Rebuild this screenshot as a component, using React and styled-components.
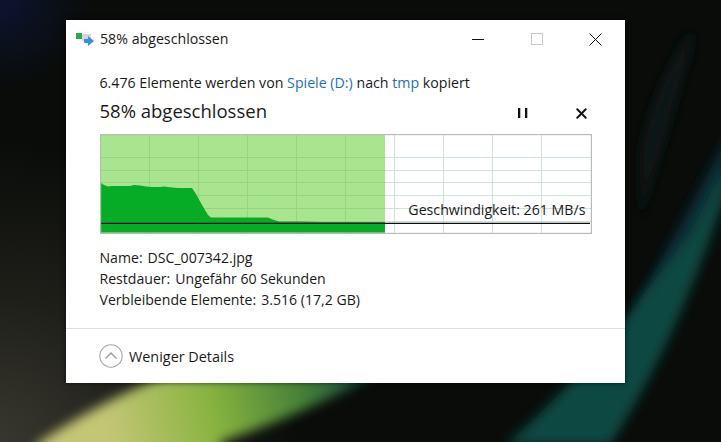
import styled, { createGlobalStyle } from "styled-components";
import { X } from "lucide-react";

const GlobalStyle = createGlobalStyle`
  html, body {
    margin: 0;
    padding: 0;
    height: 100%;
    background: #090c09;
    overflow: hidden;
  }
`;

const Desktop = styled.div`
  position: relative;
  width: 721px;
  height: 442px;
  padding: 20px 0 0 66px;
  box-sizing: border-box;
  overflow: hidden;
  font-family: "Open Sans", "Noto Sans", sans-serif;
`;

const Wallpaper = styled.svg`
  position: absolute;
  left: 0;
  top: 0;
`;

const Window = styled.div`
  position: relative;
  width: 559px;
  height: 363px;
  background: #ffffff;
  display: flex;
  flex-direction: column;
  box-shadow: 0 0 5px rgba(0, 0, 0, 0.6);
`;

const TitleBar = styled.div`
  display: flex;
  align-items: center;
  height: 38px;
  padding-left: 10px;
`;

const TitleText = styled.div`
  flex: 1;
  margin-left: 3px;
  margin-top: -2px;
  font-size: 14.2px;
  color: #1a1a1a;
`;

const WinButton = styled.div`
  width: 59px;
  height: 38px;
  display: flex;
  align-items: center;
  justify-content: center;
`;

const Body = styled.div`
  flex: 1;
  display: flex;
  flex-direction: column;
  padding: 15px 33px 0 33.5px;
`;

const CopyLine = styled.div`
  font-size: 14.2px;
  line-height: 19px;
  white-space: nowrap;
  color: #1a1a1a;
`;

const Accent = styled.span`
  color: #1c6fb8;
`;

const ProgressRow = styled.div`
  display: flex;
  align-items: center;
  height: 28px;
  margin: 4px -18px 10px 0;
`;

const ProgressTitle = styled.div`
  flex: 1;
  font-size: 18.5px;
  color: #1a1a1a;
`;

const ActionButton = styled.div`
  width: 58px;
  margin-top: 6px;
  display: flex;
  align-items: center;
  justify-content: center;
  color: #111;
`;

const Graph = styled.div`
  position: relative;
  width: 492px;
  height: 100px;
`;

const SpeedLabel = styled.div`
  position: absolute;
  right: 6px;
  top: 66px;
  font-size: 14.2px;
  line-height: 19px;
  white-space: nowrap;
  color: #1a1a1a;
`;

const Details = styled.div`
  margin-top: 13px;
  display: flex;
  flex-direction: column;
`;

const DetailRow = styled.div`
  display: flex;
  gap: 5px;
  font-size: 14.1px;
  line-height: 21px;
  color: #1a1a1a;
`;

const Footer = styled.div`
  height: 54px;
  border-top: 1px solid #dfdfdf;
  display: flex;
  align-items: center;
  padding-left: 33px;
  gap: 6px;
  font-size: 14.4px;
  color: #1a1a1a;
`;

const vLines = [149.5, 198.5, 247.5, 296.5, 345.5, 394.5, 443.5, 492.5, 541.5];
const hLines = [157.5, 170.5, 182.5, 195.5, 208.5, 221.5];

function GraphDrawing() {
  return (
    <svg width="492" height="100" viewBox="100 134 492 100">
      <rect x="100" y="134" width="492" height="100" fill="#ffffff" />
      <rect x="101" y="135" width="284" height="98" fill="#a9e48f" />
      {vLines.map((x) => (
        <line
          key={x}
          x1={x}
          x2={x}
          y1="135"
          y2="233"
          stroke={x < 385 ? "#95d481" : "#cfe3dc"}
        />
      ))}
      {hLines.map((y) => (
        <g key={y}>
          <line x1="101" x2="385" y1={y} y2={y} stroke="#95d481" />
          <line x1="385" x2="591" y1={y} y2={y} stroke="#cfe3dc" />
        </g>
      ))}
      <polygon
        fill="#06ab26"
        points="101,232.5 101,183 104,185 108,186.5 112,186 130,186 134,185 140,185.5 146,186.5 152,187 160,187 164,186.5 172,187.5 178,188 192,188 196,194 202,205 208,215 211,217.5 268,217.5 274,220 279,221.5 300,221.5 320,222 385,222 385,232.5"
      />
      <line x1="101" x2="590" y1="223.3" y2="223.3" stroke="#0c0c0c" strokeWidth="1.2" />
      <rect
        x="100.5"
        y="134.5"
        width="491"
        height="99"
        fill="none"
        stroke="#b8bcb8"
        strokeWidth="1.4"
      />
    </svg>
  );
}

function CopyIcon() {
  return (
    <svg width="21" height="16" viewBox="0 0 21 16">
      <rect x="0" y="2" width="6" height="6" fill="#2fa84a" />
      <rect x="6" y="3" width="9" height="7" fill="#d4d9de" />
      <path d="M8 8h4V5l6 5-6 5v-3H8z" fill="#3a8ee0" />
    </svg>
  );
}

function PauseIcon() {
  return (
    <svg width="12" height="12" viewBox="0 0 12 12">
      <rect x="1" y="1" width="2.3" height="10" fill="#111" />
      <rect x="8" y="1" width="2.3" height="10" fill="#111" />
    </svg>
  );
}

function CollapseIcon() {
  return (
    <svg width="24" height="24" viewBox="0 0 24 24">
      <circle cx="12" cy="12" r="11.2" fill="#fff" stroke="#a6a6a6" strokeWidth="1.1" />
      <path d="M6.5 14.5 12 9l5.5 5.5" fill="none" stroke="#9a9a9a" strokeWidth="1.4" />
    </svg>
  );
}

export default function App() {
  return (
    <Desktop>
      <GlobalStyle />
      <Wallpaper width="721" height="442" viewBox="0 0 721 442">
        <defs>
          <filter id="soft" x="-30%" y="-30%" width="160%" height="160%">
            <feGaussianBlur stdDeviation="6" />
          </filter>
          <linearGradient id="lime" gradientUnits="userSpaceOnUse" x1="110" y1="442" x2="370" y2="380">
            <stop offset="0" stopColor="#c4c676" />
            <stop offset="0.4" stopColor="#88b340" />
            <stop offset="0.72" stopColor="#4a8438" />
            <stop offset="1" stopColor="#10503f" />
          </linearGradient>
          <radialGradient id="corner" gradientUnits="userSpaceOnUse" cx="0" cy="442" r="300">
            <stop offset="0" stopColor="#38372f" />
            <stop offset="0.5" stopColor="#1e1e19" />
            <stop offset="1" stopColor="#1e1e19" stopOpacity="0" />
          </radialGradient>
          <radialGradient id="navy" gradientUnits="userSpaceOnUse" cx="0" cy="0" r="90">
            <stop offset="0" stopColor="#0d1430" />
            <stop offset="1" stopColor="#0d1430" stopOpacity="0" />
          </radialGradient>
        </defs>
        <rect width="721" height="442" fill="#090c09" />
        <rect width="721" height="442" fill="url(#corner)" />
        <rect width="721" height="442" fill="url(#navy)" />
        <path
          d="M40 442L25 465H225L220 442C270 425 320 405 380 372H170C120 395 85 412 40 442z"
          fill="url(#lime)"
          filter="url(#soft)"
        />
        <path
          d="M640 300C665 250 700 190 730 130V170C700 230 670 280 640 330z"
          fill="#0a2a38"
          filter="url(#soft)"
        />
        <path
          d="M505 445C560 400 620 330 690 233C705 205 715 185 725 165V195C700 270 665 360 610 445z"
          fill="#0d4a42"
          filter="url(#soft)"
        />
        <path
          d="M640 150C650 100 670 60 690 30L694 40C680 90 660 160 640 220z"
          fill="#0a1618"
          filter="url(#soft)"
        />
      </Wallpaper>
      <Window>
        <TitleBar>
          <CopyIcon />
          <TitleText>58% abgeschlossen</TitleText>
          <WinButton>
            <svg width="12" height="12" viewBox="0 0 12 12">
              <line x1="0" x2="12" y1="6.5" y2="6.5" stroke="#111" />
            </svg>
          </WinButton>
          <WinButton>
            <svg width="12" height="12" viewBox="0 0 12 12">
              <rect x="0.5" y="0.5" width="11" height="11" fill="none" stroke="#c8c8c8" />
            </svg>
          </WinButton>
          <WinButton>
            <svg width="13" height="13" viewBox="0 0 13 13">
              <path d="M.5.5l12 12M12.5.5l-12 12" stroke="#111" fill="none" />
            </svg>
          </WinButton>
        </TitleBar>
        <Body>
          <CopyLine>
            6.476 Elemente werden von <Accent>Spiele (D:)</Accent> nach <Accent>tmp</Accent> kopiert
          </CopyLine>
          <ProgressRow>
            <ProgressTitle>58% abgeschlossen</ProgressTitle>
            <ActionButton>
              <PauseIcon />
            </ActionButton>
            <ActionButton>
              <X size={17} strokeWidth={2.8} />
            </ActionButton>
          </ProgressRow>
          <Graph>
            <GraphDrawing />
            <SpeedLabel>Geschwindigkeit: 261 MB/s</SpeedLabel>
          </Graph>
          <Details>
            <DetailRow>
              <span>Name:</span>
              <span>DSC_007342.jpg</span>
            </DetailRow>
            <DetailRow>
              <span>Restdauer:</span>
              <span>Ungefähr 60 Sekunden</span>
            </DetailRow>
            <DetailRow>
              <span>Verbleibende Elemente:</span>
              <span>3.516 (17,2 GB)</span>
            </DetailRow>
          </Details>
        </Body>
        <Footer>
          <CollapseIcon />
          Weniger Details
        </Footer>
      </Window>
    </Desktop>
  );
}
